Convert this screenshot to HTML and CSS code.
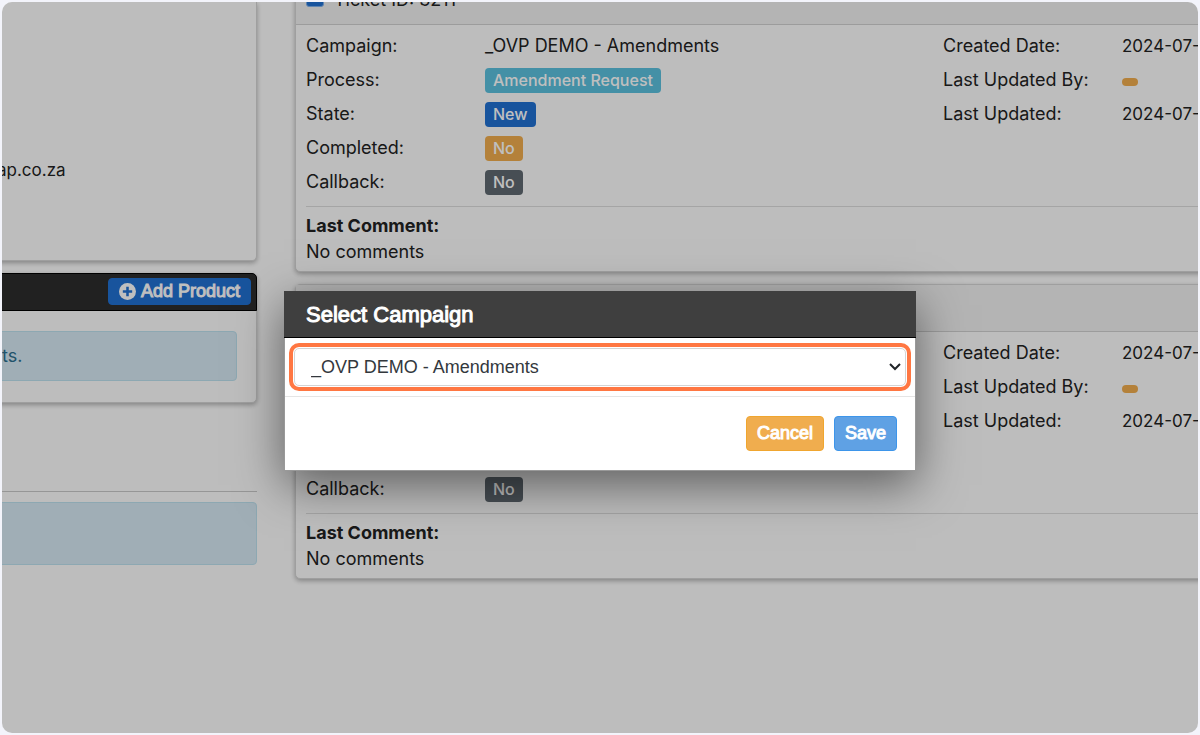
FILE: index.html
```
<!DOCTYPE html>
<html lang="en">
  <head>
    <meta charset="UTF-8" />
    <meta name="viewport" content="width=device-width, initial-scale=1.0" />
    <title>Select Campaign</title>
    <link rel="stylesheet" href="styles.css">
  </head>
  <body>
    <div class="screen">
      <aside class="sidebar">
        <section class="card contact">
          <p>ap.co.za</p>
        </section>

        <section class="card products">
          <header class="products-header">
            <button class="btn btn-add" type="button">
              <svg width="17" height="17" viewBox="0 0 16 16" aria-hidden="true">
                <circle cx="8" cy="8" r="8" fill="currentColor" />
                <path d="M8 3.6v8.8M3.6 8h8.8" stroke="#2070d2" stroke-width="2.4" />
              </svg>
              Add Product
            </button>
          </header>
          <div class="products-body">
            <div class="alert">ts.</div>
          </div>
        </section>

        <hr class="divider">
        <div class="alert alert-empty"></div>
      </aside>

      <main class="tickets">
        <article class="card ticket">
          <header class="ticket-header">
            <span class="ticket-icon"></span>
            Ticket ID: 3211
          </header>
          <div class="ticket-body">
            <div class="details">
              <dl>
                <dt>Campaign:</dt><dd>_OVP DEMO - Amendments</dd>
                <dt>Process:</dt><dd><span class="badge info">Amendment Request</span></dd>
                <dt>State:</dt><dd><span class="badge primary">New</span></dd>
                <dt>Completed:</dt><dd><span class="badge warning">No</span></dd>
                <dt>Callback:</dt><dd><span class="badge secondary">No</span></dd>
              </dl>
              <dl>
                <dt>Created Date:</dt><dd class="date">2024-07-</dd>
                <dt>Last Updated By:</dt><dd><span class="badge warning empty"></span></dd>
                <dt>Last Updated:</dt><dd class="date">2024-07-</dd>
              </dl>
            </div>
            <div class="comment">
              <strong>Last Comment:</strong>
              <p>No comments</p>
            </div>
          </div>
        </article>

        <article class="card ticket">
          <header class="ticket-header"></header>
          <div class="ticket-body">
            <div class="details">
              <dl class="last-row">
                <dt>Callback:</dt><dd><span class="badge secondary">No</span></dd>
              </dl>
              <dl>
                <dt>Created Date:</dt><dd class="date">2024-07-</dd>
                <dt>Last Updated By:</dt><dd><span class="badge warning empty"></span></dd>
                <dt>Last Updated:</dt><dd class="date">2024-07-</dd>
              </dl>
            </div>
            <div class="comment">
              <strong>Last Comment:</strong>
              <p>No comments</p>
            </div>
          </div>
        </article>
      </main>

      <div class="backdrop">
        <form class="modal" role="dialog" aria-labelledby="modal-title">
          <h2 class="modal-title" id="modal-title">Select Campaign</h2>
          <div class="modal-body">
            <div class="highlight">
              <select class="campaign" aria-labelledby="modal-title">
                <option>_OVP DEMO - Amendments</option>
              </select>
              <svg class="chevron" width="12" height="8" viewBox="0 0 12 8" aria-hidden="true">
                <path d="M1 1l5 5 5-5" fill="none" stroke="#212529" stroke-width="2" />
              </svg>
            </div>
          </div>
          <footer class="modal-footer">
            <button class="btn btn-cancel" type="button">Cancel</button>
            <button class="btn btn-save" type="button">Save</button>
          </footer>
        </form>
      </div>
    </div>
  </body>
</html>
```

FILE: styles.css
```
* {
  box-sizing: border-box;
}

body {
  margin: 0;
  padding: 2px;
  background: #f3f4fb;
  color: #222;
  font-family: Inter, sans-serif;
  font-size: 18px;
  line-height: 26px;
}

p,
dl,
dd,
h2 {
  margin: 0;
}

.screen {
  position: relative;
  display: flex;
  gap: 38px;
  min-height: calc(100vh - 4px);
  overflow: hidden;
  border-radius: 10px;
  background: #fdfdfd;
}

.card {
  border: 1px solid #d4d4d4;
  border-radius: 5px;
  background: #fdfdfd;
  box-shadow: 0 2px 5px rgba(0, 0, 0, 0.3);
}

/* left column, runs off the left edge */
.sidebar {
  flex: 0 0 295px;
  margin-left: -40px;
}

.contact {
  height: 259px;
  margin-bottom: 12px;
  padding: 155px 34px 0;
  border-top: 0;
  border-radius: 0 0 5px 5px;
  font-size: 17px;
}

.products-header {
  display: flex;
  justify-content: flex-end;
  margin: -1px -1px 0;
  padding: 4px 5px 5px;
  border: 1px solid #000;
  border-radius: 5px 5px 0 0;
  background: #2d2d2d;
}

.products-body {
  padding: 20px 19px 21px;
}

.alert {
  padding: 11px 19px;
  border: 1px solid #bce0ee;
  border-radius: 4px;
  background: #d6e8f3;
  color: #2c6f8e;
}

.alert-empty {
  height: 63px;
}

.divider {
  margin: 88px 0 10px;
  border: 0;
  border-top: 1px solid #c8c8c8;
}

/* tickets, run off the right edge */
.tickets {
  flex: 1;
  min-width: 0;
  margin-right: -20px;
}

.ticket {
  margin-bottom: 12px;
}

.ticket:first-child {
  margin-top: -25px;
}

.ticket-header {
  display: flex;
  align-items: center;
  gap: 10px;
  height: 47px;
  padding: 0 10px 2px;
  border-bottom: 1px solid #d0d0d0;
  background: #f1f1f1;
}

.ticket-icon {
  width: 18px;
  height: 14px;
  border: 1px solid #7fb0ea;
  border-radius: 3px;
  background: #2070d2;
}

.ticket-body {
  padding: 4px 10px 6px;
}

.details {
  display: grid;
  grid-template-columns: 637px 1fr;
  padding-bottom: 7px;
  border-bottom: 1px solid #dcdcdc;
}

.details dl {
  display: grid;
  grid-template-columns: 179px 1fr;
  grid-auto-rows: 34px;
  align-content: start;
  align-items: center;
  white-space: nowrap;
}

.details .last-row {
  align-content: end;
  min-height: 170px;
}

.date {
  font-size: 17px;
}

.comment {
  padding-top: 6px;
}

.badge {
  display: block;
  width: fit-content;
  padding: 0 8px;
  border-radius: 4px;
  color: #fff;
  font-size: 16px;
  font-weight: 500;
  line-height: 25px;
}

.info {
  background: #5bc0de;
}

.primary {
  background: #2070d2;
}

.warning {
  background: #f0ad4e;
}

.secondary {
  background: #5f6970;
}

.empty {
  height: 8px;
  margin-top: 4px;
}

.backdrop {
  position: absolute;
  inset: 0;
  display: flex;
  align-items: center;
  justify-content: center;
  padding-top: 26px;
  background: rgba(0, 0, 0, 0.25);
}

.modal {
  width: 632px;
  border: 1px solid #999;
  background: #fff;
  box-shadow: 0 14px 44px rgba(0, 0, 0, 0.5);
  font-family: "Liberation Sans", Arial, sans-serif;
}

.modal-title {
  margin: -1px -1px 0;
  padding: 11px 22px 9px;
  border-bottom: 1px solid #000;
  background: #3f3f3f;
  color: #fff;
  font-size: 22px;
  font-weight: 400;
  line-height: 26px;
  -webkit-text-stroke: 1px #fff;
}

.modal-body {
  padding: 5px 4px;
  border-bottom: 1px solid #e5e5e5;
}

.highlight {
  position: relative;
  padding: 1px;
  border: 4px solid #ff7742;
  border-radius: 10px;
}

.campaign {
  display: block;
  width: 100%;
  height: 38px;
  padding: 0 16px;
  border: 1px solid #d4d4d4;
  border-radius: 5px;
  appearance: none;
  background: #fff;
  color: #33383d;
  font: inherit;
  font-size: 18px;
}

.chevron {
  position: absolute;
  top: 16px;
  right: 6px;
  pointer-events: none;
}

.modal-footer {
  display: flex;
  justify-content: flex-end;
  gap: 10px;
  padding: 19px 18px;
}

.btn {
  padding: 0 10px;
  border: 1px solid;
  border-radius: 4px;
  color: #fff;
  font-family: "Liberation Sans", Arial, sans-serif;
  font-size: 18px;
  line-height: 33px;
  -webkit-text-stroke: 1px;
}

.btn-add {
  display: flex;
  align-items: center;
  gap: 5px;
  border-color: #2070d2;
  background: #2070d2;
  line-height: 25px;
}

.btn-cancel {
  border-color: #f0a62f;
  background: #f0ad4e;
}

.btn-save {
  border-color: #3d95ea;
  background: #5fa1e4;
}
```
